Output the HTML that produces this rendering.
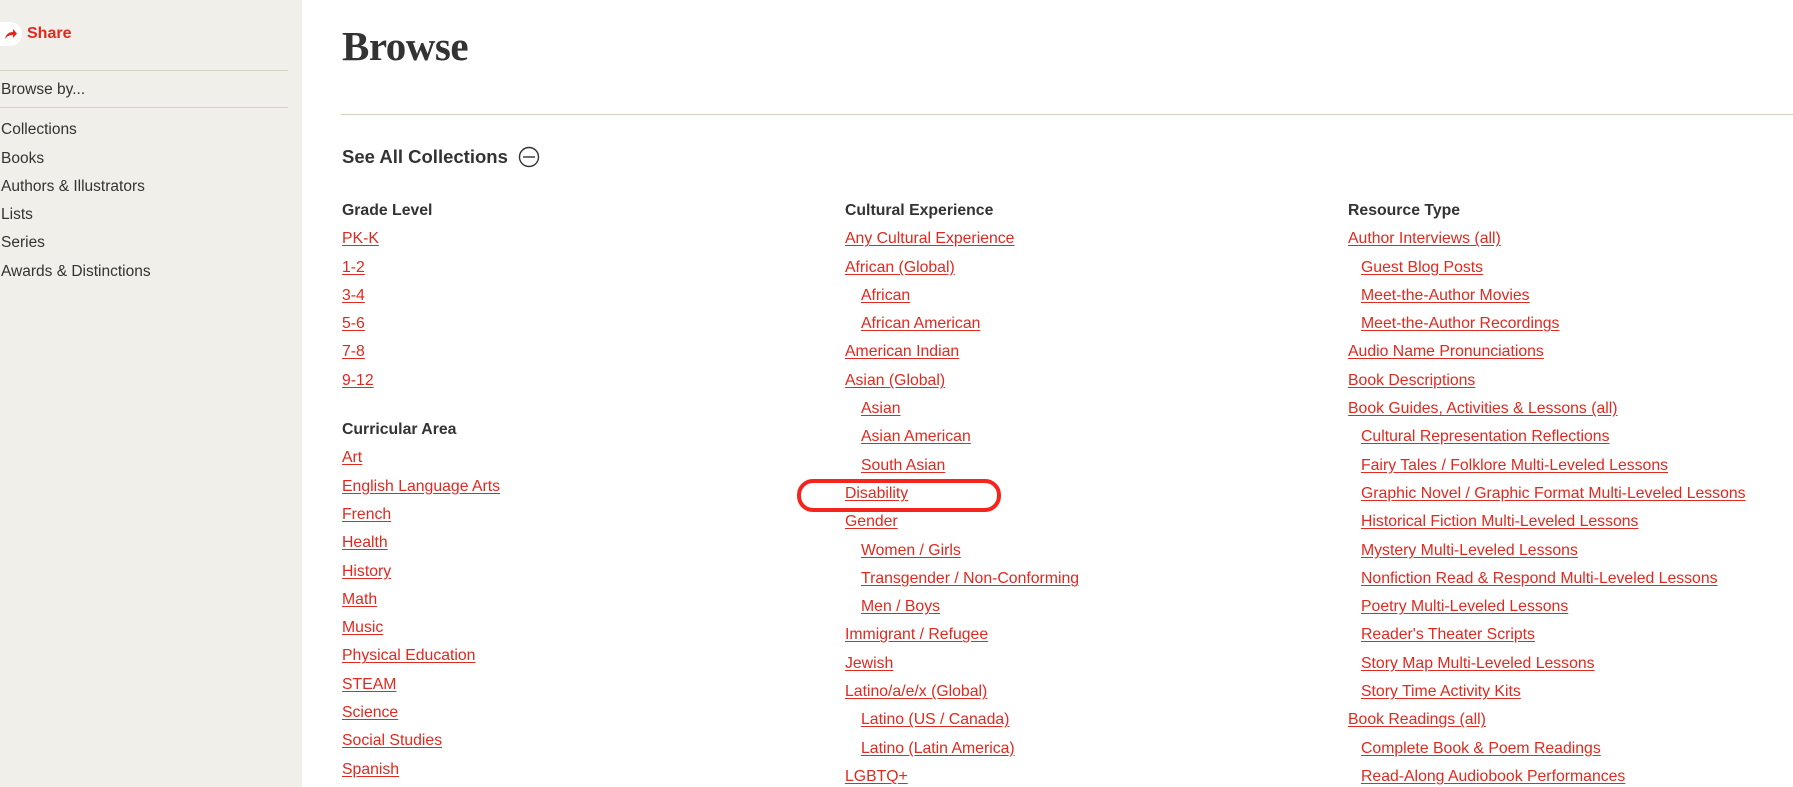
<!DOCTYPE html>
<html><head><meta charset="utf-8"><style>
*{margin:0;padding:0;box-sizing:border-box}
html,body{width:1793px;height:787px;overflow:hidden;background:#fff;font-family:"Liberation Sans",sans-serif}
#wrap{position:relative;width:1793px;height:787px;overflow:hidden}
#side{position:absolute;left:0;top:0;width:302px;height:787px;background:#f1efea}
#side .share{position:absolute;left:0;top:22px;height:24px;display:flex;align-items:center;color:#e0291f;font-weight:bold;font-size:16px}
#side .share .ic{width:22px;height:24px;border-radius:0 12px 12px 0;background:#fff;display:flex;align-items:center;justify-content:center;margin-right:5px}
.hr{position:absolute;left:0;width:288px;height:1px;background:#d6cfc2}
.si{position:absolute;left:1px;font-size:15.5px;color:#333;line-height:20px}
#main h1{position:absolute;left:342px;top:22px;font-family:"Liberation Serif",serif;font-size:41px;font-weight:bold;color:#333;letter-spacing:-0.5px}
#mhr{position:absolute;left:341px;top:114px;right:0;height:1px;background:#d6cfc2}
#see{position:absolute;left:342px;top:146px;font-size:18.5px;font-weight:bold;color:#333;display:flex;align-items:center}
#see svg{margin-left:10px}
.col{position:absolute;top:197px}
.col div{height:28.3px;line-height:28.3px;font-size:15.8px;white-space:nowrap}
.col .h{font-weight:bold;color:#333}
.col a{color:#e0291f;text-decoration:underline;text-underline-offset:2px}
.col .i{padding-left:16px}
.c3 .i{padding-left:13px}
.gap{margin-top:21px}
#oval{position:absolute;left:797px;top:479px;width:204px;height:33px;border:4px solid #f5241c;border-radius:16px}
</style></head><body><div id="wrap">
<div id="side">
<div class="share"><span class="ic"><svg width="14" height="12" viewBox="0 0 14 12"><path d="M1 11 C2 6 5 4 9 4 L9 1 L13 5.5 L9 10 L9 7 C6 7 3 8 1 11Z" fill="#e0291f"/></svg></span>Share</div>
<div class="hr" style="top:70px"></div>
<div class="si" style="top:80px">Browse by...</div>
<div class="hr" style="top:107px"></div>
<div class="si" style="top:120px">Collections</div>
<div class="si" style="top:149px">Books</div>
<div class="si" style="top:177px">Authors &amp; Illustrators</div>
<div class="si" style="top:205px">Lists</div>
<div class="si" style="top:233px">Series</div>
<div class="si" style="top:262px">Awards &amp; Distinctions</div>
</div>
<div id="main">
<h1>Browse</h1>
<div id="mhr"></div>
<div id="see">See All Collections <svg width="22" height="22" viewBox="0 0 22 22"><circle cx="11" cy="11" r="9.5" fill="none" stroke="#333" stroke-width="1.4"/><line x1="5" y1="11" x2="17" y2="11" stroke="#333" stroke-width="1.4"/></svg></div>
<div class="col" style="left:342px">
<div class="h">Grade Level</div>
<div><a>PK-K</a></div><div><a>1-2</a></div><div><a>3-4</a></div><div><a>5-6</a></div><div><a>7-8</a></div><div><a>9-12</a></div>
<div class="h gap">Curricular Area</div>
<div><a>Art</a></div><div><a>English Language Arts</a></div><div><a>French</a></div><div><a>Health</a></div><div><a>History</a></div><div><a>Math</a></div><div><a>Music</a></div><div><a>Physical Education</a></div><div><a>STEAM</a></div><div><a>Science</a></div><div><a>Social Studies</a></div><div><a>Spanish</a></div>
</div>
<div class="col" style="left:845px">
<div class="h">Cultural Experience</div>
<div><a>Any Cultural Experience</a></div>
<div><a>African (Global)</a></div>
<div class="i"><a>African</a></div>
<div class="i"><a>African American</a></div>
<div><a>American Indian</a></div>
<div><a>Asian (Global)</a></div>
<div class="i"><a>Asian</a></div>
<div class="i"><a>Asian American</a></div>
<div class="i"><a>South Asian</a></div>
<div><a>Disability</a></div>
<div><a>Gender</a></div>
<div class="i"><a>Women / Girls</a></div>
<div class="i"><a>Transgender / Non-Conforming</a></div>
<div class="i"><a>Men / Boys</a></div>
<div><a>Immigrant / Refugee</a></div>
<div><a>Jewish</a></div>
<div><a>Latino/a/e/x (Global)</a></div>
<div class="i"><a>Latino (US / Canada)</a></div>
<div class="i"><a>Latino (Latin America)</a></div>
<div><a>LGBTQ+</a></div>
</div>
<div class="col c3" style="left:1348px">
<div class="h">Resource Type</div>
<div><a>Author Interviews (all)</a></div>
<div class="i"><a>Guest Blog Posts</a></div>
<div class="i"><a>Meet-the-Author Movies</a></div>
<div class="i"><a>Meet-the-Author Recordings</a></div>
<div><a>Audio Name Pronunciations</a></div>
<div><a>Book Descriptions</a></div>
<div><a>Book Guides, Activities &amp; Lessons (all)</a></div>
<div class="i"><a>Cultural Representation Reflections</a></div>
<div class="i"><a>Fairy Tales / Folklore Multi-Leveled Lessons</a></div>
<div class="i"><a>Graphic Novel / Graphic Format Multi-Leveled Lessons</a></div>
<div class="i"><a>Historical Fiction Multi-Leveled Lessons</a></div>
<div class="i"><a>Mystery Multi-Leveled Lessons</a></div>
<div class="i"><a>Nonfiction Read &amp; Respond Multi-Leveled Lessons</a></div>
<div class="i"><a>Poetry Multi-Leveled Lessons</a></div>
<div class="i"><a>Reader's Theater Scripts</a></div>
<div class="i"><a>Story Map Multi-Leveled Lessons</a></div>
<div class="i"><a>Story Time Activity Kits</a></div>
<div><a>Book Readings (all)</a></div>
<div class="i"><a>Complete Book &amp; Poem Readings</a></div>
<div class="i"><a>Read-Along Audiobook Performances</a></div>
<div><a>Book Reviews</a></div>
</div>
<div id="oval"></div>
</div>
</div></body></html>
